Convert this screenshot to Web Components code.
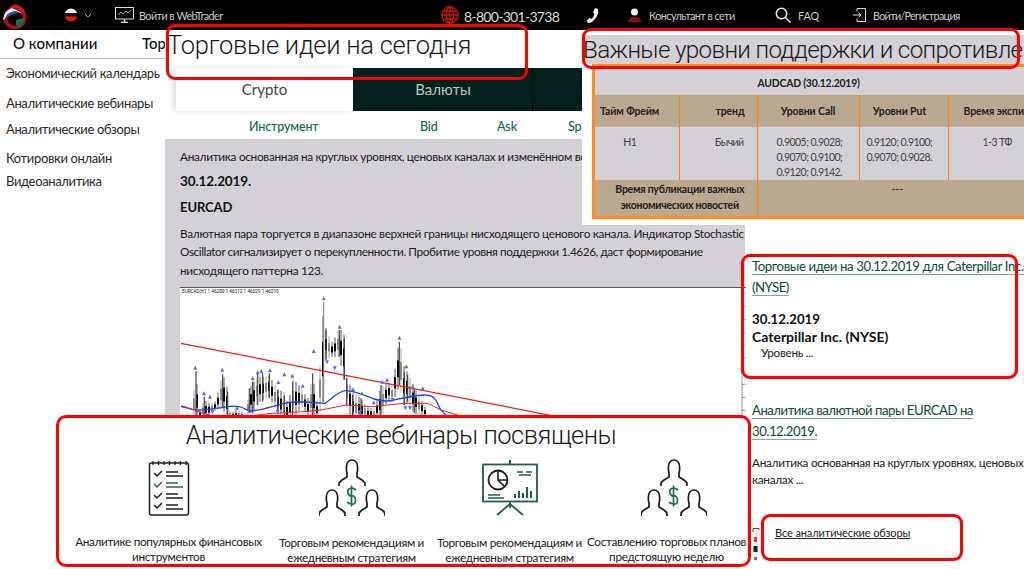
<!DOCTYPE html>
<html lang="ru">
<head>
<meta charset="utf-8">
<title>Аналитика</title>
<style>
  html, body { margin: 0; height: 569px; overflow: hidden; background: #fff; }
  body { font-family: Lato, Roboto, "Liberation Sans", sans-serif; color: #1c1c1c; }
  #page { position: relative; width: 1024px; height: 569px; overflow: hidden; }
  #stage { display: grid; grid-template-columns: 165px 580px 279px; height: 539px; }
</style>
</head>
<body>
<div id="page">
  <site-header></site-header>
  <div id="stage">
    <side-nav></side-nav>
    <center-panel></center-panel>
    <idea-column></idea-column>
  </div>

  <levels-panel></levels-panel>
  <red-callout style="left:582px;top:28px;width:438px;height:41px"></red-callout>
  <red-callout style="left:166px;top:24px;width:362px;height:56px">
    <big-title>Торговые идеи на сегодня</big-title>
  </red-callout>
  <red-callout style="left:741px;top:254px;width:277px;height:125px"></red-callout>
  <red-callout style="left:761px;top:514px;width:202px;height:47px;--fill:#fff;--pad:0 0 0 11px">
    <a style="font-size:11px;letter-spacing:-.1px;color:#222;text-decoration:underline;line-height:32px">Все аналитические обзоры</a>
  </red-callout>
  <chart-scrap></chart-scrap>
  <webinar-box></webinar-box>
</div>

<script>
function shadow(el, html) {
  el.attachShadow({ mode: 'open' }).innerHTML = html;
}

class SiteHeader extends HTMLElement {
  constructor() {
    super();
    shadow(this, `
      <style>
        :host { display: flex; align-items: center; height: 30px; background: #000; color: #c9c9c9; font-size: 10.8px; letter-spacing: -.55px; box-sizing: border-box; }
        svg { display: block; flex: none; }
        span { white-space: nowrap; flex: none; }
        .phone { font-size: 14px; letter-spacing: -.7px; color: #dcdcdc; margin-top: 3px; }
      </style>
      <svg style="margin-left:2px" width="26" height="27" viewBox="0 0 26 27">
        <circle cx="13" cy="16" r="9.5" fill="#000" stroke="#b01010" stroke-width="3.5"/>
        <path d="M14 18l8-2q1 6-5 9l-3-1z" fill="#1b6b50"/>
        <path d="M1 17Q3 8 10 6L20 11Q12 10 6 13Q3 15 2 18z" fill="#f2f2f2"/>
        <path d="M4 14Q8 9 14 9L19 11Q11 11 6 15z" fill="#2a50c8"/>
        <path d="M7 6Q12 0 18 4Q23 7 24 13L19 9Q14 5 7 6z" fill="#d01818"/>
      </svg>
      <svg style="margin-left:36px" width="14" height="14" viewBox="0 0 14 14">
        <clipPath id="fc"><circle cx="7" cy="7" r="6.5"/></clipPath>
        <g clip-path="url(#fc)"><rect width="14" height="5" fill="#eee"/><rect y="5" width="14" height="4" fill="#111"/><rect y="8.5" width="14" height="6" fill="#e01414"/></g>
      </svg>
      <svg style="margin-left:6px" width="8" height="5" viewBox="0 0 8 5"><path d="M1 1l3 3 3-3" fill="none" stroke="#aaa" stroke-width="1"/></svg>
      <svg style="margin-left:23px" width="19" height="16" viewBox="0 0 19 16" fill="none" stroke="#ddd">
        <rect x=".5" y=".5" width="18" height="11.5"/><path d="M9.5 12v3M6 15.5h7" stroke-width="1.4"/>
        <path d="M3 8l3-3 2 2 3-3 2 2 3-3" stroke-width=".7"/>
      </svg>
      <span style="margin-left:5px;width:83px">Войти в WebTrader</span>
      <svg style="margin-left:219px" width="18" height="18" viewBox="0 0 18 18" fill="none" stroke="#c81414" stroke-width="1.3">
        <circle cx="9" cy="9" r="8"/><ellipse cx="9" cy="9" rx="3.6" ry="8"/><path d="M1 9h16M2.2 5h13.6M2.2 13h13.6M9 1v16"/>
      </svg>
      <span class="phone" style="margin-left:5px;width:96px">8-800-301-3738</span>
      <svg style="margin-left:26px" width="13" height="17" viewBox="0 0 13 17">
        <path d="M9 1l3 1q1 5-3 10-3 4-7 4l-1.500-2.500 3-2.500 2 1q2-2 3-5l-1.500-1.500z" fill="#f4f4f4"/>
      </svg>
      <svg style="margin-left:29px" width="13" height="14" viewBox="0 0 13 14">
        <circle cx="6.500" cy="4" r="3.500" fill="#f2f2f2"/><path d="M0 14q0-5 6.500-5T13 14z" fill="#8c1010"/>
      </svg>
      <span style="margin-left:8px;width:85px">Консультант в сети</span>
      <svg style="margin-left:41px" width="16" height="16" viewBox="0 0 16 16" fill="none" stroke="#eee" stroke-width="1.500">
        <circle cx="6.500" cy="6.500" r="5.200"/><path d="M10.500 10.500L15.500 15.500"/>
      </svg>
      <span style="margin-left:7px;width:18px;letter-spacing:0">FAQ</span>
      <svg style="margin-left:37px" width="13" height="14" viewBox="0 0 13 14" fill="none" stroke="#ddd">
        <path d="M4 3.500V.5h8.500v13H4v-3"/><path d="M0 7h8M5.500 4.500L8 7l-2.500 2.500"/>
      </svg>
      <span style="margin-left:7px;letter-spacing:-.7px">Войти/Регистрация</span>
    `);
  }
}

class SideNav extends HTMLElement {
  constructor() {
    super();
    shadow(this, `
      <style>
        :host { display: block; font-size: 13px; letter-spacing: -.35px; color: #2b2b2b; white-space: nowrap; }
        .top { display: flex; height: 29px; box-sizing: border-box; padding: 0 0 3px 13px; align-items: center; font-size: 15px; letter-spacing: 0; font-weight: 500; color: #111; border-bottom: 1px solid #c4c4c4; overflow: hidden; }
        .top span { flex: none; width: 129px; }
        nav { display: flex; flex-direction: column; padding-left: 6px; }
        a { display: block; line-height: 18px; }
      </style>
      <div class="top"><span>О компании</span><span>Тор</span></div>
      <nav>
        <a style="margin-top:5px">Экономический календарь</a>
        <a style="margin-top:12px">Аналитические вебинары</a>
        <a style="margin-top:8px">Аналитические обзоры</a>
        <a style="margin-top:11px">Котировки онлайн</a>
        <a style="margin-top:5px">Видеоаналитика</a>
      </nav>
    `);
  }
}

class CenterPanel extends HTMLElement {
  constructor() {
    super();
    shadow(this, `
      <style>
        :host { display: block; font-size: 11.8px; letter-spacing: -.3px; color: #1c1c1c; }
        .tabs { display: grid; grid-template-columns: 177px 179px 50px; height: 43px; margin: 38px 0 0 11px; font-size: 15px; letter-spacing: 0; text-align: center; line-height: 43px; width: 406px; }
        .on { color: #444; box-shadow: -3px 0 6px rgba(0,0,0,.12); }
        .off { background: #04201c; color: #a9cfc2; border-left: 1px solid #04201c; }
        .last { border-left: 1px solid #000; }
        .head { position: relative; height: 28px; margin-left: 11px; width: 406px; color: #0f6a50; font-size: 12.5px; letter-spacing: -.15px; font-weight: 500; overflow: hidden; }
        .head span { position: absolute; top: 8px; }
        article { background: #d3d1d5; padding: 9px 0 0 15px; height: 392px; box-sizing: border-box; }
        p { margin: 0; white-space: nowrap; }
        .date { font-size: 13.5px; letter-spacing: -.1px; font-weight: 700; color: #111; }
      </style>
      <div class="tabs"><div class="on">Crypto</div><div class="off">Валюты</div><div class="off last"></div></div>
      <div class="head"><span style="left:73px">Инструмент</span><span style="left:244px">Bid</span><span style="left:321px">Ask</span><span style="left:392px">Sp</span></div>
      <article>
        <p style="line-height:18px">Аналитика основанная на круглых уровнях, ценовых каналах и изменённом во</p>
        <p class="date" style="margin-top:6px;line-height:18px">30.12.2019.</p>
        <p class="date" style="margin-top:8px;line-height:18px;font-size:13px">EURCAD</p>
        <p style="margin-top:9px;line-height:18.4px">Валютная пара торгуется в диапазоне верхней границы нисходящего ценового канала. Индикатор Stochastic<br><span style="letter-spacing:-.42px">Oscillator сигнализирует о перекупленности. Пробитие уровня поддержки 1.4626, даст формирование</span><br>нисходящего паттерна 123.</p>
        <price-chart></price-chart>
      </article>
    `);
  }
}

class PriceChart extends HTMLElement {
  constructor() {
    super();
    // anchors read off the reference: x, top, bottom (3x units)
    const anchors = [[60,395,400],[75,258,400],[85,370,405],[100,335,405],[117,345,400],[135,345,375],[155,268,370],[170,320,400],[178,395,400],[200,380,405],[225,395,400],[235,310,385],[245,290,385],[260,265,360],[275,265,350],[295,265,340],[320,315,385],[340,330,405],[352,370,405],[365,290,395],[395,315,365],[410,340,400],[425,265,405],[440,350,405],[458,50,350],[465,130,225],[485,175,215],[505,135,215],[520,160,285],[527,280,360],[545,330,405],[570,340,405],[590,360,405],[610,360,405],[630,300,405],[650,290,345],[665,305,350],[685,170,300],[700,260,360],[710,270,350],[730,310,385],[755,345,395],[768,370,405]];
    let bars = '';
    let i = 0;
    for (let x = 60; x <= 768; x += 9) {
      let k = anchors.findIndex(a => a[0] >= x);
      let b = anchors[k], a = anchors[Math.max(k - 1, 0)];
      let t = b[0] === a[0] ? 0 : (x - a[0]) / (b[0] - a[0]);
      let jit = Math.sin(i * 12.9) * 10;
      let top = a[1] + (b[1] - a[1]) * t + jit, bot = a[2] + (b[2] - a[2]) * t - jit / 2;
      let grey = i % 3 === 1;
      bars += `<path d="M${x} ${top}V${bot}" stroke="${grey ? '#999' : '#333'}" stroke-width="2.500"/>`;
      bars += `<rect x="${x - 3}" y="${top + (bot - top) * .3}" width="6" height="${(bot - top) * .4}" fill="${grey ? '#888' : '#000'}"/>`;
      i++;
    }
    for (const a of anchors) {
      if (a[2] - a[1] > 60) bars += `<path d="M${a[0]} ${a[1]}V${a[2]}" stroke="${a[0] === 458 ? '#888' : '#444'}" stroke-width="3.500"/>`;
    }
    const up = [[73,248],[99,325],[117,335],[154,254],[198,368],[245,280],[260,262],[271,258],[297,256],[322,291],[340,268],[364,272],[395,302],[428,198],[458,40],[506,125],[546,312],[573,325],[608,352],[634,290],[648,284],[685,158],[706,244],[725,305],[755,310]];
    const down = [[125,380],[320,380],[468,232],[491,250],[565,382],[665,345],[703,370],[717,370]];
    const arrows = up.map(p => `<path d="M${p[0]} ${p[1] - 6}l6 12h-12z" fill="#5a68f0"/>`).join('') +
      down.map(p => `<path d="M${p[0]} ${p[1] + 6}l6 -12h-12z" fill="#5a68f0"/>`).join('');
    let ticks = '';
    for (let y = 25; y < 400; y += 39) ticks += `<path d="M1713 ${y}h7" stroke="#555" stroke-width="2"/><path d="M1720 ${y}h5" stroke="#7a8a50" stroke-width="2"/>`;
    shadow(this, `
      <style>
        :host { display: block; width: 566px; height: 132px; background: #fff; border-top: 1px solid #555; margin-top: 7px; }
        svg { display: block; }
      </style>
      <svg width="566" height="131" viewBox="27 9 1698 393">
        <text x="33" y="24" font-size="14" letter-spacing="0" font-family="Roboto, sans-serif" fill="#111">EURCAD,H1 1.46200 1.46312 1.46029 1.46210</text>
        ${bars}
        <path d="M30 175L1215 406" stroke="#f01c1c" stroke-width="3.500" fill="none"/>
        <path d="M30 363C50 366 60 375 80 375S120 372 170 365S220 378 240 378S300 365 340 355S450 356 460 355S500 317 525 317S590 335 610 342S650 350 670 345S720 332 760 330S800 365 810 375S850 420 860 425" stroke="#2440ee" stroke-width="4" fill="none"/>
        <polyline points="30,365 70,375 120,392 200,398 300,385 400,380 450,375 525,360 600,365 700,355 770,355 810,375 860,390 945,412" stroke="#f02020" stroke-width="3" fill="none" stroke-linejoin="round"/>
        ${arrows}
        <path d="M1713 9V402" stroke="#666" stroke-width="2"/>
        ${ticks}
      </svg>
    `);
  }
}

class ChartScrap extends HTMLElement {
  constructor() {
    super();
    shadow(this, `
      <style>
        :host { position: absolute; left: 752px; top: 527px; width: 8px; height: 36px; }
        svg { display: block; }
      </style>
      <svg width="8" height="36" viewBox="0 0 8 36">
        <path d="M1 5V1.500H7V3" fill="none" stroke="#444"/>
        <rect x="1" y="5" width="5" height="29" fill="#eee"/>
        <rect x="2" y="10" width="3" height="5" fill="#e33"/>
        <rect x="1.500" y="19" width="4" height="6" fill="#222"/>
        <rect x="2" y="30" width="3" height="3" fill="#5a8a78"/>
      </svg>
    `);
  }
}

class LevelsPanel extends HTMLElement {
  constructor() {
    super();
    shadow(this, `
      <style>
        :host { position: absolute; left: 582px; top: 30px; width: 442px; height: 195px; background: #fff; overflow: hidden; }
        .title { background: #d3d1d5; margin-top: 5px; height: 29px; font-family: Roboto, sans-serif; font-size: 24.2px; letter-spacing: -.65px; font-weight: 300; line-height: 30px; color: #1a1a1a; white-space: nowrap; padding-left: 1px; overflow: hidden; }
        .box { margin: 0 0 0 10px; border: 3px solid #ff8c1a; border-right: 0; height: 149px; width: 500px; background: #d3d1d5; overflow: hidden; }
        table { border-collapse: collapse; table-layout: fixed; width: 497px; font-size: 10.5px; letter-spacing: -.1px; color: #333; }
        td, th { padding: 0; text-align: center; border-left: 1px solid #f08a20; }
        tr > :first-child { border-left: 0; }
        .cap th { height: 28px; border: 0; padding: 3px 70px 0 0; box-sizing: border-box; font-size: 10.4px; letter-spacing: -.2px; color: #222; }
        .hd th { height: 32px; background: #baa98e; color: #222; }
        .row td { height: 52px; vertical-align: top; padding-top: 8px; box-sizing: border-box; font-size: 10.5px; letter-spacing: -.55px; line-height: 15px; color: #444; }
        .foot th, .foot td { height: 37px; background: #baa98e; vertical-align: top; padding-top: 1px; box-sizing: border-box; line-height: 16px; }
        .foot th { color: #222; padding-left: 8px; letter-spacing: -.25px; }
        .nums { text-align: left; padding-left: 19px; }
      </style>
      <div class="title">Важные уровни поддержки и сопротивле</div>
      <div class="box">
        <table>
          <colgroup><col style="width:84px"><col style="width:78px"><col style="width:102px"><col style="width:89px"><col style="width:144px"></colgroup>
          <tr class="cap"><th colspan="5">AUDCAD (30.12.2019)</th></tr>
          <tr class="hd"><th style="text-align:left;padding-left:5px">Тайм Фрейм</th><th style="text-align:right;padding-right:12px">тренд</th><th>Уровни Call</th><th style="padding-right:8px">Уровни Put</th><th style="text-align:left;padding-left:15px">Время экспи</th></tr>
          <tr class="row"><td style="padding-right:14px">H1</td><td style="text-align:right;padding-right:13px">Бычий</td><td class="nums">0.9005; 0.9028;<br>0.9070; 0.9100;<br>0.9120; 0.9142.</td><td class="nums" style="padding-left:7px">0.9120; 0.9100;<br>0.9070; 0.9028.</td><td style="text-align:left;padding-left:34px">1-3 ТФ</td></tr>
          <tr class="foot"><th colspan="2">Время публикации важных<br>экономических новостей</th><td colspan="3" style="padding-right:55px">---</td></tr>
        </table>
      </div>
    `);
  }
}

class IdeaColumn extends HTMLElement {
  constructor() {
    super();
    shadow(this, `
      <style>
        :host { display: block; padding: 226px 0 0 7px; font-size: 11.8px; letter-spacing: -.3px; color: #222; white-space: nowrap; overflow: hidden; }
        .link { font-size: 13.2px; letter-spacing: -.5px; line-height: 21px; color: #0c4a3a; }
        .link span { border-bottom: 1px solid #86a89c; }
        b { display: block; font-size: 14px; letter-spacing: 0; line-height: 17px; color: #111; font-weight: 700; }
        p { margin: 0; line-height: 17px; }
      </style>
      <div class="link"><span style="letter-spacing:-.4px">Торговые идеи на 30.12.2019 для Caterpillar Inc.</span><br><span>(NYSE)</span></div>
      <b style="margin-top:13px;font-size:13.3px">30.12.2019</b>
      <b>Caterpillar Inc. (NYSE)</b>
      <p style="padding-left:9px;margin-top:-1px">Уровень ...</p>
      <div class="link" style="margin-top:39px"><span>Аналитика валютной пары EURCAD на</span><br><span>30.12.2019.</span></div>
      <p style="margin-top:12px">Аналитика основанная на круглых уровнях, ценовых<br>каналах ...</p>
    `);
  }
}

class RedCallout extends HTMLElement {
  constructor() {
    super();
    shadow(this, `
      <style>
        :host { position: absolute; display: block; box-sizing: border-box; border: 3px solid #f00; border-radius: 9px; background: var(--fill, transparent); padding: var(--pad, 0); white-space: nowrap; overflow: hidden; }
      </style>
      <slot></slot>
    `);
  }
}

class BigTitle extends HTMLElement {
  constructor() {
    super();
    shadow(this, `
      <style>
        :host { display: block; font-family: Roboto, sans-serif; font-size: 25.5px; letter-spacing: -.25px; font-weight: 300; line-height: 30px; margin: 3px 0 0 -2px; color: #1a1a1a; }
      </style>
      <slot></slot>
    `);
  }
}

class WebinarItem extends HTMLElement {
  constructor() {
    super();
    shadow(this, `
      <style>
        :host { display: flex; flex-direction: column; align-items: center; min-width: 0; }
        .icon { height: 60px; display: flex; align-items: center; margin-left: var(--icon-x, 0); }
        .cap { margin: var(--cap-top, 18px) 0 0 var(--cap-x, 0); font-size: 11.8px; letter-spacing: -.35px; line-height: 15px; color: #222; text-align: center; white-space: nowrap; }
      </style>
      <div class="icon"><slot name="icon"></slot></div>
      <div class="cap"><slot></slot></div>
    `);
  }
}

class WebinarBox extends HTMLElement {
  constructor() {
    super();
    const people = `
      <svg slot="icon" width="66" height="58" viewBox="0 0 66 58" fill="none" stroke="#1c1c1c" stroke-width="1.700">
        <defs><path id="m" d="M-13 26V24Q-13 22-10 20L-5 17V13Q-6 10-5.500 6A5.500 6 0 0 1 5.500 6Q6 10 5 13V17L10 20Q13 22 13 24V26"/></defs>
        <use href="#m" x="33" y="1"/><use href="#m" x="13" y="31"/><use href="#m" x="53" y="31"/>
        <path d="M37 31Q34 28.500 31 29.500T29 34T33 37T36.500 41T33 45T28 43M32.500 26.500V47.500" stroke="#1f6b55"/>
      </svg>`;
    shadow(this, `
      <style>
        :host { position: absolute; left: 56px; top: 415px; width: 695px; height: 152px; box-sizing: border-box; border: 3.5px solid #f00; border-radius: 10px; background: #fff; padding-top: 3px; overflow: hidden; }
        h2 { margin: 0 5px 0 0; font-family: Roboto, sans-serif; font-size: 25.5px; letter-spacing: -.5px; font-weight: 300; line-height: 28px; text-align: center; color: #1a1a1a; }
        .grid { display: grid; grid-template-columns: 180px 186px 130px 190px; padding-left: 19.5px; margin-top: 9px; }
      </style>
      <h2>Аналитические вебинары посвящены</h2>
      <div class="grid">
        <webinar-item style="--cap-top:16px">
          <svg slot="icon" width="42" height="56" viewBox="0 0 42 56" fill="none" stroke="#1c1c1c">
            <rect x="1.500" y="3" width="39" height="52" rx="2" stroke-width="1.500"/>
            <path d="M5 1v4M10.500 1v4M16 1v4M21.500 1v4M27 1v4M32.500 1v4M38 1v4" stroke-width="1.300"/>
            <path d="M6 13l3 3 5-5M6 35l3 3 5-5M6 45l3 3 5-5" stroke-width="1.500"/>
            <path d="M6 24l3 3 5-5" stroke="#1f6b55" stroke-width="1.500"/>
            <path d="M18 12h12M18 16h17M18 34h12M18 38h17M18 45h12M18 49h17" stroke-width="1.500"/>
            <path d="M18 23h12M18 27h17" stroke="#1f6b55" stroke-width="1.500"/>
          </svg>
          Аналитике популярных финансовых<br>инструментов
        </webinar-item>
        <webinar-item style="--cap-top:17px">${people}Торговым рекомендациям и<br>ежедневным стратегиям</webinar-item>
        <webinar-item style="--cap-top:17px">
          <svg slot="icon" width="56" height="56" viewBox="0 0 56 56" fill="none" stroke="#1f5f4c">
            <path d="M28 0v4" stroke-width="2"/>
            <rect x="1" y="4.500" width="54" height="37" stroke-width="1.800"/>
            <path d="M28 41.500V48M28 44L15 55M28 44L41 55" stroke-width="1.800"/>
            <circle cx="16" cy="20" r="9.500" stroke="#1c1c1c" stroke-width="1.800"/>
            <path d="M16 10.500V20H26M16 20L23 27" stroke="#1c1c1c" stroke-width="1.600"/>
            <path d="M35 12h6M44 12h6M37 15h12" stroke-width="1.300"/>
            <path d="M6 35h12M6 38h16" stroke-width="1.300"/>
            <path d="M33 38v-4M37 38v-7M41 38v-5M45 38v-11M49 38v-7" stroke-width="2"/>
          </svg>
          Торговым рекомендациям и<br>ежедневным стратегиям
        </webinar-item>
        <webinar-item style="--cap-top:16px;--cap-x:-6px;--icon-x:8px">${people}Составлению торговых планов<br>предстоящую неделю</webinar-item>
      </div>
    `);
  }
}

customElements.define('site-header', SiteHeader);
customElements.define('side-nav', SideNav);
customElements.define('price-chart', PriceChart);
customElements.define('chart-scrap', ChartScrap);
customElements.define('center-panel', CenterPanel);
customElements.define('levels-panel', LevelsPanel);
customElements.define('idea-column', IdeaColumn);
customElements.define('red-callout', RedCallout);
customElements.define('big-title', BigTitle);
customElements.define('webinar-item', WebinarItem);
customElements.define('webinar-box', WebinarBox);
</script>
</body>
</html>
